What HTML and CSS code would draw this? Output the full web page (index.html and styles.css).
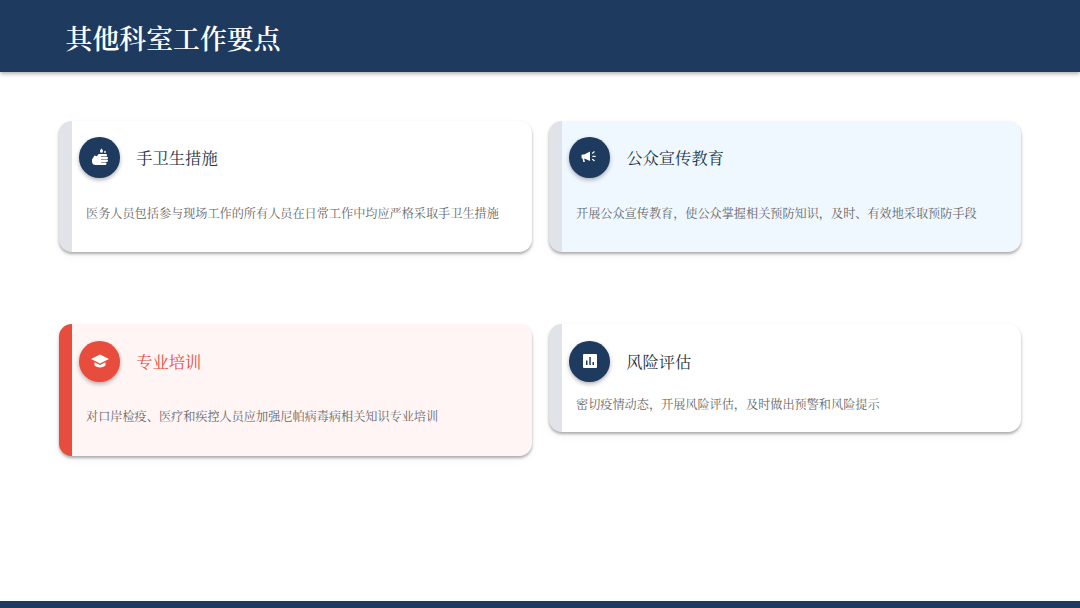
FILE: index.html
```html
<!DOCTYPE html>
<html lang="zh-CN">
<head>
<meta charset="utf-8">
<title>其他科室工作要点</title>
<link rel="stylesheet" href="styles.css">
</head>
<body>
<header class="top"><h1>其他科室工作要点</h1></header>
<main class="grid">
  <section class="card">
    <div class="head">
      <span class="icon"><svg viewBox="0 0 20 20" width="20" height="20"><path fill="#fff" d="M2 12.500 4.500 8.500 6.800 9.300 8.600 7H11V18H6q-4 0-4-3.500z"/><rect fill="#fff" x="9" y="7" width="8" height="2.300" rx="1.100"/><rect fill="#fff" x="9" y="9.800" width="9" height="2.300" rx="1.100"/><rect fill="#fff" x="9" y="12.600" width="9" height="2.300" rx="1.100"/><rect fill="#fff" x="9" y="15.400" width="7.500" height="2.500" rx="1.100"/><path fill="#fff" d="M11.500 1.500c.9 1.200 1.500 1.900 1.500 2.700a1.500 1.500 0 0 1-3 0c0-.8.600-1.500 1.500-2.700zM15 3.500c.5.700.9 1.100.9 1.600a.9.900 0 0 1-1.800 0c0-.5.400-.9.900-1.600z"/></svg></span>
      <h2>手卫生措施</h2>
    </div>
    <p>医务人员包括参与现场工作的所有人员在日常工作中均应严格采取手卫生措施</p>
  </section>
  <section class="card card-blue">
    <div class="head">
      <span class="icon"><svg viewBox="0 0 20 20" width="20" height="20"><path fill="#fff" d="M2.500 7.500h1.700L10 4.500v9.500L4.500 11.500H4.200l.7 3.500H3.300l-.7-3.500a1 1 0 0 1-1.100-1V8.500a1 1 0 0 1 1-1z"/><path fill="none" stroke="#fff" stroke-width="1.200" stroke-linecap="round" d="M12.800 9.300h2.400M12.500 6.200l1.700-1.400M12.500 12.300l1.700 1.400"/></svg></span>
      <h2>公众宣传教育</h2>
    </div>
    <p>开展公众宣传教育，使公众掌握相关预防知识，及时、有效地采取预防手段</p>
  </section>
  <section class="card card-red">
    <div class="head">
      <span class="icon"><svg viewBox="0 0 20 20" width="20" height="20"><path fill="#fff" d="M10 3.500 19 8l-9 4.500L1 8z"/><path fill="#fff" d="M4.500 11.200 10 14l5.500-2.800v3.300C14 15.800 12 16.500 10 16.500s-4-.7-5.500-2z"/></svg></span>
      <h2>专业培训</h2>
    </div>
    <p>对口岸检疫、医疗和疾控人员应加强尼帕病毒病相关知识专业培训</p>
  </section>
  <section class="card card-short">
    <div class="head">
      <span class="icon"><svg viewBox="0 0 20 20" width="20" height="20"><path fill="#fff" fill-rule="evenodd" d="M4 3h12a1 1 0 0 1 1 1v12a1 1 0 0 1-1 1H4a1 1 0 0 1-1-1V4a1 1 0 0 1 1-1zM6 9.500V14h1.500V9.500zM9.300 6V14h1.500V6zM12.500 11v3H14v-3z"/></svg></span>
      <h2>风险评估</h2>
    </div>
    <p>密切疫情动态，开展风险评估，及时做出预警和风险提示</p>
  </section>
</main>
<footer class="bottom"></footer>
</body>
</html>
```
FILE: styles.css
```css
* { box-sizing: border-box; }
html, body { margin: 0; height: 608px; overflow: hidden; }
body {
  display: flex;
  flex-direction: column;
  background: #fff;
  font-family: "Liberation Serif", "Noto Serif CJK SC", serif;
}
.top {
  height: 72px;
  flex: none;
  padding: 8px 0 0 65.500px;
  display: flex;
  align-items: center;
  background: #1e3a5f;
  box-shadow: 0 2px 4px rgba(0, 0, 0, .3);
}
.top h1 {
  margin: 0;
  color: #fff;
  font-size: 26.900px;
  font-weight: 600;
  line-height: 1;
}
.grid {
  flex: 1;
  display: grid;
  grid-template-columns: 472.500px 472px;
  column-gap: 17.500px;
  row-gap: 72px;
  align-items: start;
  align-content: start;
  padding: 49px 0 0 59.060px;
}
.card {
  height: 131px;
  padding: 16px 0 0 14px;
  background: #fff;
  border-left: 13px solid #e0e4e8;
  border-radius: 12.660px;
  box-shadow: 0 2px 3px rgba(0, 0, 0, .32), 0 4px 12px rgba(0, 0, 0, .03);
}
.card-blue { background: #f0f8ff; }
.card-red {
  height: 132px;
  padding-top: 17px;
  background: #fff5f5;
  border-left-color: #e74c3c;
}
.card-short { height: 108px; padding-top: 17px; }
.head {
  display: flex;
  align-items: center;
  gap: 16.400px;
  margin-left: -6.700px;
}
.icon {
  width: 40.500px;
  height: 40.500px;
  flex: none;
  display: flex;
  align-items: center;
  justify-content: center;
  border-radius: 50%;
  background: #1e3a5f;
  box-shadow: 0 2px 4px rgba(0, 0, 0, .3);
}
.card-red .icon { background: #e74c3c; }
.head h2 {
  margin: 0;
  padding-top: 3px;
  font-size: 16.300px;
  font-weight: 400;
  line-height: 20px;
  color: #233447;
}
.card-red h2 { color: #e74c3c; }
.card p {
  margin: 28px 0 0;
  font-size: 12.150px;
  line-height: 16px;
  color: #666;
  white-space: nowrap;
}
.card-red p { margin-top: 27px; }
.card-short p { margin-top: 15px; }
.bottom { height: 7px; flex: none; background: #1e3a5f; }
```
